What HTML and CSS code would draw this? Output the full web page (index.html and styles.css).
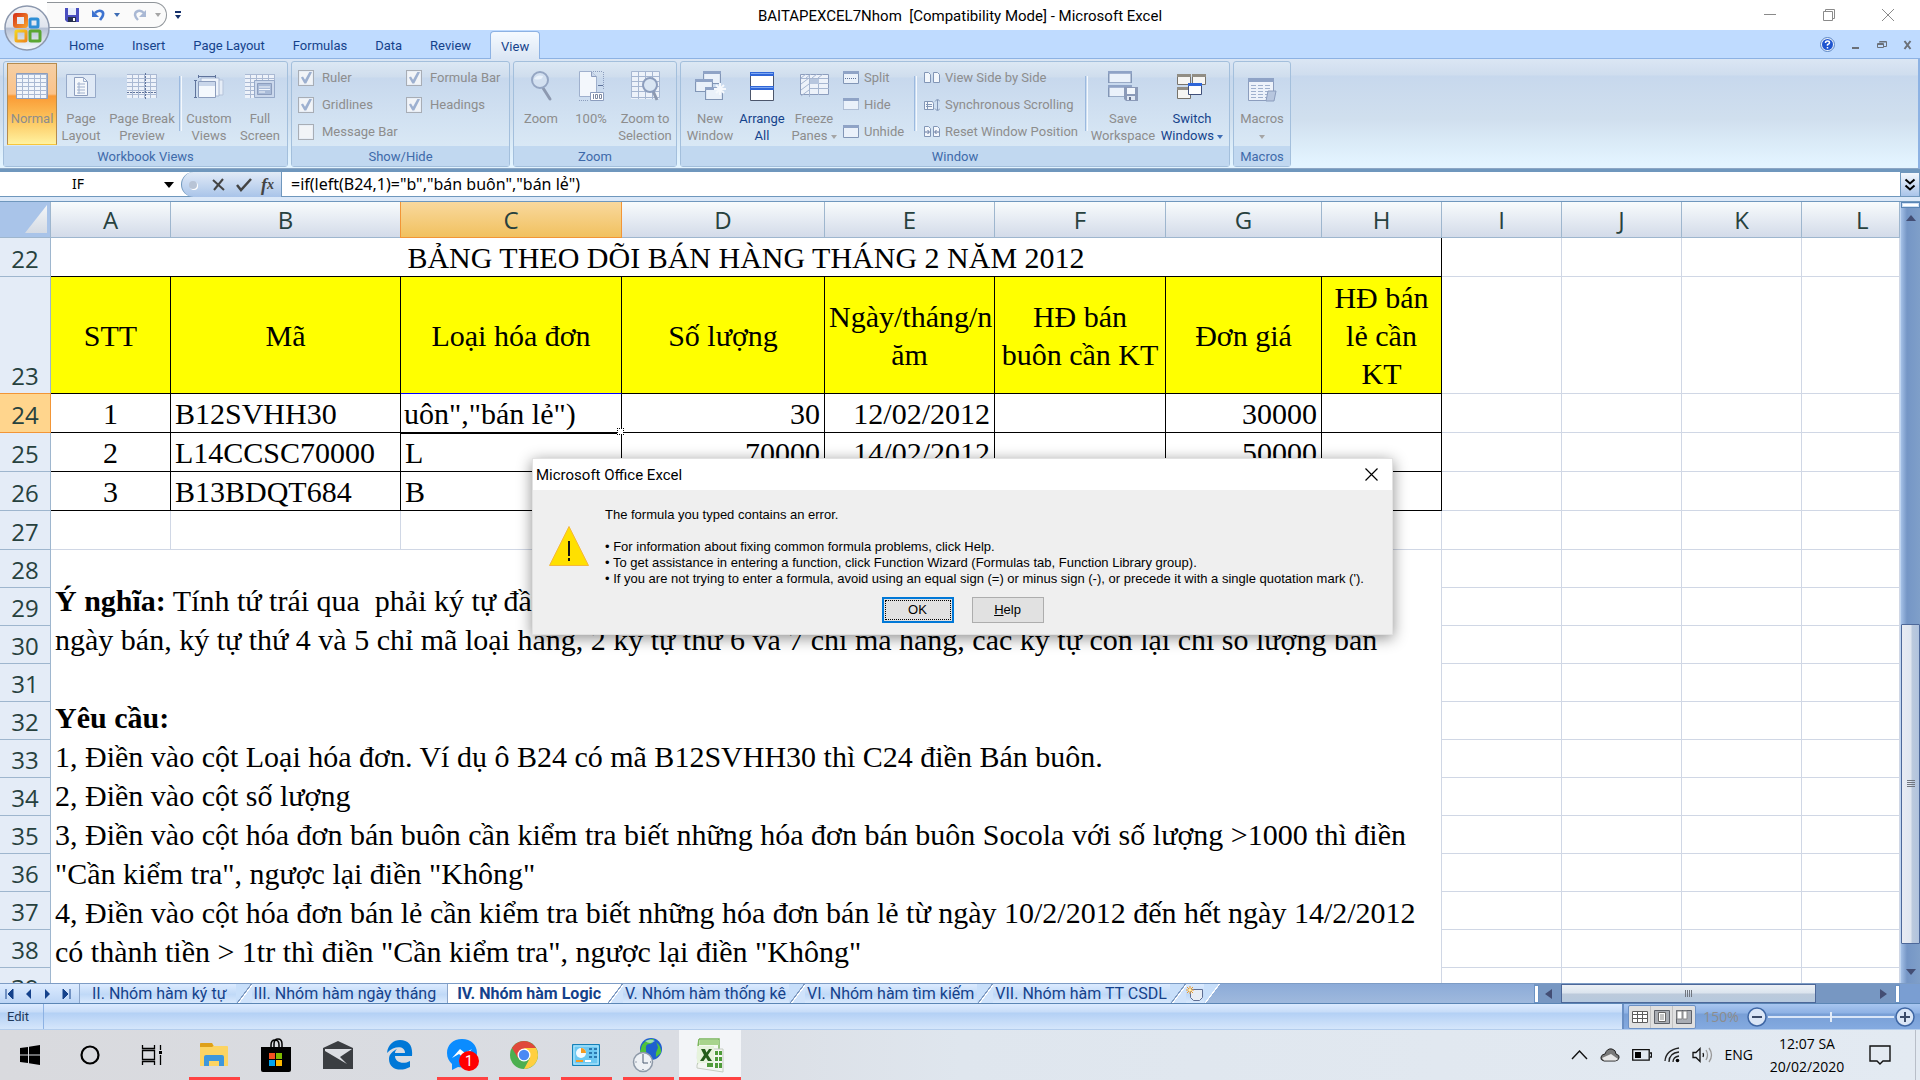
FILE: index.html
```html
<!DOCTYPE html>
<html lang="vi">
<head>
<meta charset="utf-8">
<title>BAITAPEXCEL7Nhom - Microsoft Excel</title>
<link rel="stylesheet" href="styles.css">
</head>
<body>
<div class="app">

<header class="titlebar">
  <div class="quick">
    <button class="bare" aria-label="Save"><svg width="14" height="14" viewBox="0 0 14 14"><path d="M0 0h14v14H2l-2-2z" fill="#4a4fc0"/><path d="M3 0h8v7H3z" fill="#e8eefc"/><path d="M3 9h8v5H3z" fill="#26304f"/><path d="M8 10h2v3H8z" fill="#fff"/></svg></button>
    <button class="bare" aria-label="Undo"><svg width="14" height="14" viewBox="0 0 14 14"><path d="M3 5c4-4 9-2 8 2-.3 2-2 3.500-3 5" fill="none" stroke="#3d73d0" stroke-width="2.600"/><path d="M0 2v7h7z" fill="#3d73d0"/></svg></button>
    <i class="caret blue"></i>
    <button class="bare" aria-label="Redo"><svg width="14" height="14" viewBox="0 0 14 14"><path d="M11 5C7 1 2 3 2 7c.3 2 1 3 3 5" fill="none" stroke="#a9b8d4" stroke-width="2.400"/><path d="M13 2v7H6z" fill="#a9b8d4"/></svg></button>
    <i class="caret gray"></i>
  </div>
  <button class="bare more" aria-label="Customize Quick Access Toolbar"><i class="bar"></i><i class="caret navy"></i></button>
  <h1 class="title">BAITAPEXCEL7Nhom&nbsp; [Compatibility Mode] - Microsoft Excel</h1>
  <div class="winbtns">
    <button class="bare" aria-label="Minimize"><svg width="14" height="14" viewBox="0 0 14 14"><path d="M1 6.500h12" stroke="#8a8a8a"/></svg></button>
    <button class="bare" aria-label="Restore"><svg width="14" height="14" viewBox="0 0 14 14" fill="none" stroke="#8a8a8a"><path d="M1.500 3.500h9v9h-9zM3.500 3V1.500h9v9H11"/></svg></button>
    <button class="bare" aria-label="Close"><svg width="14" height="14" viewBox="0 0 14 14"><path d="M1 1l12 12M13 1L1 13" stroke="#8a8a8a"/></svg></button>
  </div>
</header>

<button class="office" aria-label="Office Button"><svg width="46" height="46" viewBox="0 0 46 46">
  <defs><linearGradient id="ob" x1="0" y1="0" x2="0" y2="1"><stop offset="0" stop-color="#f4f5f8"/><stop offset=".48" stop-color="#dfe4ee"/><stop offset=".5" stop-color="#b4bfd4"/><stop offset="1" stop-color="#f6fafe"/></linearGradient>
  <linearGradient id="o1" x1="0" y1="0" x2="1" y2="1"><stop offset="0" stop-color="#d83a1a"/><stop offset="1" stop-color="#f59a2c"/></linearGradient>
  <linearGradient id="o2" x1="0" y1="0" x2="1" y2="1"><stop offset="0" stop-color="#f4d21f"/><stop offset="1" stop-color="#ee8a1c"/></linearGradient></defs>
  <circle cx="23" cy="23" r="22" fill="url(#ob)" stroke="#8c98ae" stroke-width="1.500"/>
  <rect x="11" y="10" width="11" height="11" rx="1" fill="none" stroke="url(#o1)" stroke-width="4"/>
  <rect x="26" y="14" width="8" height="8" rx="1" fill="none" stroke="#2f8fd6" stroke-width="3"/>
  <rect x="12" y="26" width="10" height="10" rx="1" fill="none" stroke="url(#o2)" stroke-width="3"/>
  <rect x="26" y="26" width="10" height="10" rx="1" fill="none" stroke="#5aa632" stroke-width="3"/>
</svg></button>

<nav class="tabs">
  <button class="tab">Home</button><button class="tab">Insert</button><button class="tab">Page Layout</button><button class="tab">Formulas</button><button class="tab">Data</button><button class="tab">Review</button><button class="tab on">View</button>
  <div class="docbtns">
    <button class="bare" aria-label="Help"><svg width="15" height="15" viewBox="0 0 15 15"><circle cx="7.500" cy="7.500" r="7" fill="#e9f1fc" stroke="#5c86c4"/><circle cx="7.500" cy="7.500" r="5.500" fill="#1f55d0"/><path d="M5.500 6q0-2 2-2t2 1.700q0 1-2 2v1M7.500 10v1.500" fill="none" stroke="#fff" stroke-width="1.500"/></svg></button>
    <button class="bare" aria-label="Minimize workbook"><svg width="10" height="10" viewBox="0 0 10 10"><path d="M1 7h7v2H1z" fill="#6b7078"/></svg></button>
    <button class="bare" aria-label="Restore workbook"><svg width="10" height="10" viewBox="0 0 10 10" fill="none" stroke="#6b7078"><path d="M.5 3.500h6v4h-6zM2.500 1.500h7v5H7M2 2h7M1 4.500h5"/></svg></button>
    <button class="bare" aria-label="Close workbook"><svg width="10" height="10" viewBox="0 0 10 10"><path d="M1.500 1l6 8M7.500 1l-6 8" stroke="#6b7078" stroke-width="2"/></svg></button>
  </div>
</nav>

<svg width="0" height="0" class="defs" aria-hidden="true"><defs>
  <pattern id="cells" width="6" height="4" patternUnits="userSpaceOnUse"><path d="M0 .5h6M.5 0v4" stroke="#aab9d3" fill="none"/></pattern>
  <symbol id="win" viewBox="0 0 16 14" preserveAspectRatio="none"><path d="M.5.5h15v12H.5z" fill="#eaf1fa" stroke="#8296b6"/><path d="M0 0h16v3H0z" fill="#8fa3c6"/></symbol>
</defs></svg>

<section class="ribbon">
  <div class="group">
    <div class="items">
      <button class="big normal"><svg width="32" height="32" viewBox="0 0 32 32"><path d="M1 4h30v24H1z" fill="#f2f6fc"/><path d="M1 4h30v24H1z" fill="url(#cells)"/><path d="M.5 3.500h31v25H.5z" fill="none" stroke="#8c9dbd"/></svg>Normal</button>
      <button class="big w48"><svg width="32" height="32" viewBox="0 0 32 32"><path d="M1.500 4.500h29v23h-29z" fill="#dfe9f6" stroke="#96a9c8"/><path d="M9.500 7.500h9l4 4v14h-13z" fill="#f5f8fc" stroke="#8c9dbd"/><path d="M18.500 7.500v4h4M12 14h8M12 17h8M12 20h8M12 23h8M14 12v12" fill="none" stroke="#9fb0cd"/></svg>Page<br>Layout</button>
      <button class="big w74"><svg width="32" height="32" viewBox="0 0 32 32"><path d="M1 4h30v24H1z" fill="#edf2fa"/><path d="M1 4h30v24H1z" fill="url(#cells)"/><path d="M19.500 3v26M1 22.500h30" stroke="#60749c" stroke-dasharray="2 1"/></svg>Page Break<br>Preview</button>
      <i class="sep"></i>
      <button class="big w54"><svg width="32" height="32" viewBox="0 0 32 32"><path d="M12 10h18v15H12z" fill="#e6edf7" stroke="#b5c3da"/><path d="M8 8h18v18H8z" fill="#edf3fb" stroke="#a9b9d4"/><path d="M5.500 11.500h17v16h-17z" fill="#f4f8fd" stroke="#8c9dbd"/><path d="M6 12h16v4H6z" fill="#c9d6ea"/><path d="M2.500 10v18M1 10.500h3M1 27.500h3M5 6.500h18M5.500 5v3M22.500 5v3" stroke="#60749c" fill="none"/></svg>Custom<br>Views</button>
      <button class="big w48"><svg width="32" height="32" viewBox="0 0 32 32"><path d="M1 4h30v24H1z" fill="#edf2fa"/><path d="M1 4h30v24H1z" fill="url(#cells)"/><path d="M10.500 10.500h20v17h-20z" fill="#cbd8ec" stroke="#96a9c8"/><path d="M13.500 13.500h14v11h-14z" fill="#a9bbd8" stroke="#8c9dbd"/><path d="M15 17h11M15 19.500h11M15 22h6" stroke="#f2f6fc"/></svg>Full<br>Screen</button>
    </div>
    <h2 class="cap">Workbook Views</h2>
  </div>
  <div class="group show">
    <div class="checks">
      <label><input type="checkbox" checked>Ruler</label><label><input type="checkbox" checked>Formula Bar</label>
      <label><input type="checkbox" checked>Gridlines</label><label><input type="checkbox" checked>Headings</label>
      <label><input type="checkbox">Message Bar</label>
    </div>
    <h2 class="cap">Show/Hide</h2>
  </div>
  <div class="group">
    <div class="items">
      <button class="big w48"><svg width="32" height="32" viewBox="0 0 32 32"><path d="M18 18l7 11" stroke="#8d99b0" stroke-width="3" stroke-linecap="round"/><circle cx="15" cy="10" r="8" fill="#d3e0f0" stroke="#95a6c3" stroke-width="2"/><path d="M9 9q3-5 9-3-1 5-9 3" fill="#eaf2fb"/></svg>Zoom</button>
      <button class="big w52"><svg width="32" height="32" viewBox="0 0 32 32"><path d="M4.500 1.500h12l5 5v20h-17z" fill="#f3f7fc" stroke="#9fb0cd"/><path d="M16.500 1.500v5h5" fill="#cbd8ec" stroke="#8c9dbd"/><path d="M4 30.500h10M28.500 2v18M18 1.500h10" stroke="#8c9dbd" stroke-dasharray="1 1"/><path d="M23 15.500h5" stroke="#60749c"/><path d="M15.500 22.500h13v8h-13z" fill="#fff" stroke="#8c9dbd"/><path d="M18.500 24v5M20.500 24.500h2v4h-2zM24.500 24.500h2v4h-2z" stroke="#7c88a0" fill="none"/></svg>100%</button>
      <button class="big w56"><svg width="32" height="32" viewBox="0 0 32 32"><path d="M2 2h28v27H2z" fill="#edf2fa"/><path d="M2.500 1.500h28v26h-28zM2.500 6.500h28M2.500 11.500h28M2.500 16.500h28M2.500 21.500h28M9.500 1v28M16.500 1v28M23.500 1v28" fill="none" stroke="#a6b6d1"/><path d="M24 21l4 9" stroke="#8d99b0" stroke-width="3"/><circle cx="21" cy="15" r="7" fill="#d9e5f3" stroke="#8c9dbd" stroke-width="2"/></svg>Zoom to<br>Selection</button>
    </div>
    <h2 class="cap">Zoom</h2>
  </div>
  <div class="group">
    <div class="items">
      <button class="big w52"><svg width="32" height="32" viewBox="0 0 32 32"><use href="#win" x="9" y="1" width="18" height="14"/><use href="#win" x="1" y="9" width="18" height="14"/><use href="#win" x="11" y="17" width="18" height="14"/><path d="M26 13v12M20 19h12M22 15l8 8M30 15l-8 8" stroke="#f6f9fd" stroke-width="2"/></svg>New<br>Window</button>
      <button class="big w52 live"><svg width="32" height="32" viewBox="0 0 32 32"><path d="M4.500 2.500h23v28h-23z" fill="#fff" stroke="#4c566b"/><path d="M4 2h24v4H4zM4 16h24v4H4z" fill="#2f66d8"/><path d="M5 3h22v1H5zM5 17h22v1H5z" fill="#7ea8f2"/></svg>Arrange<br>All</button>
      <button class="big w52"><svg width="32" height="32" viewBox="0 0 32 32"><path d="M2.500 4.500h28v20h-28z" fill="#edf2fa" stroke="#8c9dbd"/><path d="M3 8.500h27M11.500 5v22M11 13.500h20M11 18.500h20M20.500 9v16M3 8l5-4M8 8l5-4M14 8l5-4M20 8l5-4M3 14l8-6M3 20l8-6M3 26l8-6" fill="none" stroke="#a6b6d1"/><path d="M12 9h9v5h-9z" fill="#b7c6de"/></svg>Freeze<span>Panes <i class="caret gray"></i></span></button>
      <div class="stack">
        <button class="small"><svg width="16" height="14" viewBox="0 0 16 14"><use href="#win" width="16" height="14"/><path d="M2 7.500h12" stroke="#60749c" stroke-dasharray="1 1"/></svg>Split</button>
        <button class="small"><svg width="16" height="14" viewBox="0 0 16 14"><path d="M.5 2.500h15v9H.5z" fill="#eaf1fa" stroke="#8296b6" stroke-dasharray="1 1"/><path d="M0 0h16v3H0z" fill="#8fa3c6"/></svg>Hide</button>
        <button class="small"><svg width="16" height="14"><use href="#win" width="16" height="14"/></svg>Unhide</button>
      </div>
      <i class="sep"></i>
      <div class="stack two">
        <button class="small"><svg width="16" height="14" viewBox="0 0 16 14"><path d="M.5 1.500h4l2 2v8h-6zM9.500 1.500h4l2 2v8h-6z" fill="#f3f7fc" stroke="#8296b6"/></svg>View Side by Side</button>
        <button class="small"><svg width="16" height="14" viewBox="0 0 16 14"><path d="M.5 3.500h8l1 2v6h-9z" fill="#f3f7fc" stroke="#8296b6"/><path d="M3.500 4v7M2 6.500h6M2 8.500h6M13.500 2v10M11 3.500l2.500-2.500L16 3.500M11 10.500l2.500 2.500 2.500-2.500" stroke="#8296b6" fill="none"/></svg>Synchronous Scrolling</button>
        <button class="small"><svg width="16" height="14" viewBox="0 0 16 14"><path d="M.5 1.500h4l2 2v8h-6zM9.500 1.500h4l2 2v8h-6z" fill="#f3f7fc" stroke="#8296b6"/><path d="M1 7h4M3.500 5l2 2-2 2M15 7h-4M12.500 5l-2 2 2 2" stroke="#60749c" fill="none"/></svg>Reset Window Position</button>
      </div>
      <i class="sep"></i>
      <button class="big w70"><svg width="32" height="32" viewBox="0 0 32 32"><use href="#win" x="1" y="1" width="24" height="13"/><use href="#win" x="1" y="15" width="24" height="13"/><path d="M17 17h14v14H19l-2-2z" fill="#8b9ab8"/><path d="M20 18h8v6h-8z" fill="#f3f7fc"/><path d="M20 26h8v4h-8z" fill="#dfe7f3"/><path d="M22 27h2v3h-2z" fill="#66738f"/></svg>Save<br>Workspace</button>
      <button class="big w68 live"><svg width="32" height="32" viewBox="0 0 32 32"><path d="M1.500 4.500h13v10h-13zM16.500 4.500h13v10h-13zM1.500 17.500h13v11h-13z" fill="#f6f5f2" stroke="#77736b"/><path d="M1 4h14v3H1zM16 4h14v3H16zM1 17h14v3H1z" fill="#918d84"/><path d="M12.500 13.500h13v11h-13z" fill="#fff" stroke="#40507a"/><path d="M12 13h14v3H12z" fill="#2f66d8"/></svg>Switch<span>Windows <i class="caret blue"></i></span></button>
    </div>
    <h2 class="cap">Window</h2>
  </div>
  <div class="group">
    <div class="items">
      <button class="big w50"><svg width="32" height="32" viewBox="0 0 32 32"><path d="M2.500 8.500h25v22h-25z" fill="#edf2fa" stroke="#8c9dbd"/><path d="M2 8h26v4H2z" fill="#8fa3c6"/><path d="M5 15.500h20M5 18.500h20M5 21.500h20M5 24.500h20M5 27.500h20" stroke="#9fb0cd" stroke-dasharray="5 2"/><path d="M22 21h8l-2 10h-8z" fill="#b7c6de" stroke="#8c9dbd"/></svg>Macros<span><i class="caret gray"></i></span></button>
    </div>
    <h2 class="cap">Macros</h2>
  </div>
</section>

<div class="fbar">
  <input class="namebox" aria-label="Name Box" value="IF">
  <button class="bare drop" aria-label="Name list"><i class="caret black"></i></button>
  <div class="fbtns">
    <i class="dot"></i>
    <button class="bare" aria-label="Cancel"><svg width="16" height="16" viewBox="0 0 16 16"><path d="M2 3l11 10M12 2L3 13" stroke="#444" stroke-width="2"/></svg></button>
    <button class="bare" aria-label="Enter"><svg width="16" height="16" viewBox="0 0 16 16"><path d="M1 8l4 5L15 2" stroke="#444" stroke-width="2.500" fill="none"/></svg></button>
    <button class="bare fx" aria-label="Insert Function"><i>f</i><sub>x</sub></button>
  </div>
  <input class="formula" aria-label="Formula Bar" value='=if(left(B24,1)="b","bán buôn","bán lẻ")'>
  <button class="expand" aria-label="Expand Formula Bar"><svg width="12" height="14" viewBox="0 0 12 14"><path d="M1.500 1.500L6 5.500l4.500-4M1.500 7.500L6 11.500l4.500-4" fill="none" stroke="#000" stroke-width="2"/></svg></button>
</div>

<main class="work">
  <div class="sheet">
  <table class="grid">
    <colgroup><col class="c-h"><col class="c-a"><col class="c-b"><col class="c-c"><col class="c-d"><col class="c-e"><col class="c-f"><col class="c-g"><col class="c-i"><col class="c-i"><col class="c-i"><col class="c-i"><col></colgroup>
    <thead><tr><th class="corner"><i></i></th><th>A</th><th>B</th><th class="sel">C</th><th>D</th><th>E</th><th>F</th><th>G</th><th>H</th><th>I</th><th>J</th><th>K</th><th class="last">L</th></tr></thead>
    <tbody>
    <tr class="r39"><th>22</th><td colspan="8" class="k mid">BẢNG THEO DÕI BÁN HÀNG THÁNG 2 NĂM 2012</td><td></td><td></td><td></td><td></td></tr>
    <tr class="r117"><th>23</th><td class="k y">STT</td><td class="k y">Mã</td><td class="k y over">Loại hóa đơn</td><td class="k y">Số lượng</td><td class="k y">Ngày/tháng/n<br>ăm</td><td class="k y">HĐ bán<br>buôn cần KT</td><td class="k y">Đơn giá</td><td class="k y">HĐ bán<br>lẻ cần<br>KT</td><td></td><td></td><td></td><td></td></tr>
    <tr class="r39"><th class="sel">24</th><td class="k mid">1</td><td class="k">B12SVHH30</td><td class="k edit">uôn","bán lẻ")</td><td class="k num">30</td><td class="k num">12/02/2012</td><td class="k"></td><td class="k num">30000</td><td class="k"></td><td></td><td></td><td></td><td></td></tr>
    <tr class="r39"><th>25</th><td class="k mid">2</td><td class="k">L14CCSC70000</td><td class="k">L</td><td class="k num">70000</td><td class="k num">14/02/2012</td><td class="k"></td><td class="k num">50000</td><td class="k"></td><td></td><td></td><td></td><td></td></tr>
    <tr class="r39"><th>26</th><td class="k mid">3</td><td class="k">B13BDQT684</td><td class="k">B</td><td class="k"></td><td class="k"></td><td class="k"></td><td class="k"></td><td class="k"></td><td></td><td></td><td></td><td></td></tr>
    <tr class="r39"><th>27</th><td></td><td></td><td></td><td></td><td></td><td></td><td></td><td></td><td></td><td></td><td></td><td></td></tr>
    <tr><th>28</th><td colspan="8" rowspan="12" class="notes"><b>Ý nghĩa:</b> Tính tứ trái qua&nbsp; phải ký tự đầu<br>ngày bán, ký tự thứ 4 và 5 chỉ mã loại hàng, 2 ký tự thứ 6 và 7 chỉ mã hàng, các ký tự còn lại chỉ số lượng bán<br><br><b>Yêu cầu:</b><br>1, Điền vào cột Loại hóa đơn. Ví dụ ô B24 có mã B12SVHH30 thì C24 điền Bán buôn.<br>2, Điền vào cột số lượng<br>3, Điền vào cột hóa đơn bán buôn cần kiểm tra biết những hóa đơn bán buôn Socola với số lượng &gt;1000 thì điền<br>"Cần kiểm tra", ngược lại điền "Không"<br>4, Điền vào cột hóa đơn bán lẻ cần kiểm tra biết những hóa đơn bán lẻ từ ngày 10/2/2012 đến hết ngày 14/2/2012<br>có thành tiền &gt; 1tr thì điền "Cần kiểm tra", ngược lại điền "Không"</td><td></td><td></td><td></td><td></td></tr>
    <tr><th>29</th><td></td><td></td><td></td><td></td></tr>
    <tr><th>30</th><td></td><td></td><td></td><td></td></tr>
    <tr><th>31</th><td></td><td></td><td></td><td></td></tr>
    <tr><th>32</th><td></td><td></td><td></td><td></td></tr>
    <tr><th>33</th><td></td><td></td><td></td><td></td></tr>
    <tr><th>34</th><td></td><td></td><td></td><td></td></tr>
    <tr><th>35</th><td></td><td></td><td></td><td></td></tr>
    <tr><th>36</th><td></td><td></td><td></td><td></td></tr>
    <tr><th>37</th><td></td><td></td><td></td><td></td></tr>
    <tr><th>38</th><td></td><td></td><td></td><td></td></tr>
    <tr><th>39</th><td></td><td></td><td></td><td></td></tr>
    </tbody>
  </table>
  </div>
  <div class="vscroll">
    <i class="split"></i>
    <i class="arrow up"></i>
    <i class="above"></i><i class="thumb"><i></i></i><i class="below"></i>
    <i class="arrow down"></i>
  </div>
</main>

<div class="sheetbar">
  <div class="nav">
    <button class="bare" aria-label="First sheet"><svg width="9" height="10" viewBox="0 0 9 10"><path d="M1 0v10M8 0L3 5l5 5z" fill="#15428b" stroke="#15428b"/></svg></button>
    <button class="bare" aria-label="Previous sheet"><svg width="9" height="10" viewBox="0 0 9 10"><path d="M7 0L2 5l5 5z" fill="#15428b"/></svg></button>
    <button class="bare" aria-label="Next sheet"><svg width="9" height="10" viewBox="0 0 9 10"><path d="M2 0l5 5-5 5z" fill="#15428b"/></svg></button>
    <button class="bare" aria-label="Last sheet"><svg width="9" height="10" viewBox="0 0 9 10"><path d="M8 0v10M1 0l5 5-5 5z" fill="#15428b" stroke="#15428b"/></svg></button>
  </div>
  <button class="st first">II. Nhóm hàm ký tự</button><i class="slash"></i>
  <button class="st wide">III. Nhóm hàm ngày tháng</button>
  <button class="st cur">IV. Nhóm hàm Logic</button><i class="slash left"></i>
  <button class="st">V. Nhóm hàm thống kê</button><i class="slash"></i>
  <button class="st">VI. Nhóm hàm tìm kiếm</button><i class="slash"></i>
  <button class="st">VII. Nhóm hàm TT CSDL</button><i class="slash"></i>
  <button class="st new" aria-label="Insert Worksheet"><svg width="18" height="16" viewBox="0 0 18 16"><path d="M4.500 3.500h12v8l-3 3h-6l-3-3z" fill="#e8edf5" stroke="#5f6f94"/><path d="M4 0v8M0 4h8M1 1l6 6M7 1L1 7" stroke="#ee9a2a"/><circle cx="4" cy="4" r="1.500" fill="#fff2b0"/></svg></button><i class="slash end"></i>
  <div class="gap"></div>
  <div class="hscroll">
    <i class="grab"></i><i class="arrow lft"></i><i class="thumb"><i></i></i><i class="rest"></i><i class="arrow rgt"></i><i class="grab"></i>
  </div>
  <i class="nook"></i>
</div>

<footer class="status">
  <span class="mode">Edit</span>
  <div class="zoombar">
    <div class="views">
      <button class="bare" aria-label="Normal view"><svg width="18" height="16" viewBox="0 0 18 16"><path d="M1 2h16v12H1z" fill="#fff"/><path d="M1.500 2.500h15v11h-15zM1 5.500h16M1 9.500h16M6.500 2v12M11.500 2v12" fill="none" stroke="#5c5c5c"/></svg></button>
      <button class="bare" aria-label="Page layout view"><svg width="18" height="16" viewBox="0 0 18 16"><path d="M1.500 1.500h15v13h-15z" fill="#a9adb4" stroke="#5c6068"/><path d="M5.500 3.500h7v9h-7z" fill="#fff" stroke="#666"/><path d="M7 6h4M7 8h4M7 10h4" stroke="#888"/></svg></button>
      <button class="bare" aria-label="Page break view"><svg width="18" height="16" viewBox="0 0 18 16"><path d="M1.500 1.500h15v13h-15z" fill="#a9adb4" stroke="#5c6068"/><path d="M2 2h5v8H2zM8 2h4v8H8z" fill="#fff" stroke="#888"/></svg></button>
    </div>
    <span class="pct">150%</span>
    <button class="bare" aria-label="Zoom Out"><svg width="22" height="22" viewBox="0 0 22 22"><circle cx="11" cy="11" r="9" fill="#dbe6f6" stroke="#3f67a5" stroke-width="1.500"/><path d="M6 11h10" stroke="#3c4b69" stroke-width="2"/></svg></button>
    <input type="range" class="zoom" aria-label="Zoom" min="0" max="100" value="50">
    <button class="bare" aria-label="Zoom In"><svg width="22" height="22" viewBox="0 0 22 22"><circle cx="11" cy="11" r="9" fill="#dbe6f6" stroke="#3f67a5" stroke-width="1.500"/><path d="M6 11h10M11 6v10" stroke="#3c4b69" stroke-width="2"/></svg></button>
  </div>
</footer>

<div class="taskbar">
  <button class="sys" aria-label="Start"><svg width="20" height="20" viewBox="0 0 20 20"><path d="M0 3l8-1v7.500H0zM9 1.800L20 0v9.500H9zM0 10.500h8V18l-8-1zM9 10.500h11V20L9 18.200z"/></svg></button>
  <button class="sys" aria-label="Search"><svg width="20" height="20" viewBox="0 0 20 20"><circle cx="10" cy="10" r="8.500" fill="none" stroke="#000" stroke-width="2.200"/></svg></button>
  <button class="sys" aria-label="Task View"><svg width="22" height="20" viewBox="0 0 22 20"><path d="M1.500 0v3.500h12V0M1.500 5.500h12v9h-12zM1.500 20v-3.500h12V20M19.500 0v5M19.500 10v10" fill="none" stroke="#000" stroke-width="1.300"/><path d="M18 6h3v3h-3z"/></svg></button>
  <button class="task run" aria-label="File Explorer"><svg width="28" height="28" viewBox="0 0 28 28"><path d="M0 3q0-1 1-1h11l2 3h13q1 0 1 1v19H0z" fill="#fcd462"/><path d="M1 2h11l1.500 3L12 6H0V3q0-1 1-1" fill="#dea019"/><path d="M4 25V16q0-2 2-2h16q2 0 2 2v9h-5v-5H9v5z" fill="#3e97dc"/></svg></button>
  <button class="task" aria-label="Microsoft Store"><svg width="30" height="34" viewBox="0 0 30 34"><path d="M0 9h30v23q0 2-2 2H2q-2 0-2-2z"/><path d="M10 10V7q0-5 4-5t4 5v3M13 10V6q0-5 4-5t4 5v4" fill="none" stroke="#000" stroke-width="1.500"/><path d="M8 15h6v6H8z" fill="#f25022"/><path d="M15 15h6v6h-6z" fill="#7fba00"/><path d="M8 22h6v6H8z" fill="#00a4ef"/><path d="M15 22h6v6h-6z" fill="#ffb900"/></svg></button>
  <button class="task" aria-label="Mail"><svg width="30" height="28" viewBox="0 0 30 28"><path d="M0 7l15-7 15 7v21H0z" fill="#3b3e42"/><path d="M2 8h27L17 16l7 7L2 10z" fill="#dcdee3"/></svg></button>
  <button class="task" aria-label="Edge"><svg width="26" height="30" viewBox="0 0 26 30"><path d="M0 13C1 4 7 0 13 0c9 0 13 6 12 16H8c0 6 8 9 15 5v6c-9 5-21 3-21-8 0-5 4-8 8-10-2 2-2 3-2 4h10c0-7-10-8-18 0z" fill="#0078d7"/></svg></button>
  <button class="task run" aria-label="Messenger, 1 notification"><svg width="32" height="32" viewBox="0 0 32 32"><path d="M16 0C7 0 1 6 1 14c0 5 2 8 5 11v6l6-3c11 2 19-5 19-14C31 6 25 0 16 0" fill="#0a8cff"/><path d="M6 19l8-9 5 4 7-4-8 9-5-4z" fill="#fff"/></svg><span class="badge">1</span></button>
  <button class="task run" aria-label="Chrome"><svg width="28" height="28" viewBox="0 0 28 28"><circle cx="14" cy="14" r="14" fill="#4caf50"/><path d="M14 14L1.900 7A14 14 0 0 1 26.100 7z" fill="#e0483a"/><path d="M2 7l12 0v7L8 17z" fill="#e0483a"/><path d="M14 7h12.100A14 14 0 0 1 14 28l6-11z" fill="#ffcf40"/><circle cx="14" cy="14" r="6.500" fill="#fff"/><circle cx="14" cy="14" r="5.200" fill="#4a8af4"/></svg></button>
  <button class="task run" aria-label="Control Panel"><svg width="28" height="22" viewBox="0 0 28 22"><path d="M.5.5h27v21H.5z" fill="#6cc8f2" stroke="#1580b8"/><path d="M2 2h24v18H2z" fill="none" stroke="#b9e8fb"/><circle cx="9" cy="9" r="5" fill="#f4fbff"/><path d="M9 9V4a5 5 0 0 1 5 5z" fill="#f59b22"/><path d="M17 5h3M17 9h3M17 13h3M22 5h3M22 9h3M22 13h3" stroke="#155f9c" stroke-width="1.500"/><path d="M4 17h7" stroke="#f59b22" stroke-width="2"/><path d="M13 17h6" stroke="#fff" stroke-width="2"/></svg></button>
  <button class="task run" aria-label="Date and Time"><svg width="32" height="38" viewBox="0 0 32 38"><circle cx="19" cy="13" r="11" fill="#1f5fd0"/><path d="M10 9q5-7 12-6-1 5-5 5t-3 6-6 2M24 6q6 5 5 11l-5 4q-1-4 1-7t-1-8" fill="#4fc23a"/><path d="M13 5q6-3 10 0-5 4-10 0" fill="#d8f4ff" opacity=".6"/><circle cx="11" cy="26" r="9.500" fill="#eef1f5" stroke="#8e99a8" stroke-width="1.500"/><path d="M11 19v8h5M11 18v1M11 33v1M3.500 26h1M18 26h1" stroke="#4b5a70" fill="none"/></svg></button>
  <button class="task run active" aria-label="Excel"><svg width="30" height="36" viewBox="0 0 30 36"><path d="M4 2h20v26H3q-1-14 1-26" fill="#f4faf0" stroke="#7ab55c" stroke-width="1.500"/><path d="M5 3h19v5H4z" fill="#a8d48c"/><path d="M10 12l18 0v23l-26-4v-3z" fill="#f4f7f2" stroke="#c5ccc2"/><path d="M20 14h3v4h-3zM24 14h3v4h-3zM20 20h3v4h-3zM24 20h3v4h-3zM20 26h3v5h-3zM24 26h3v5h-3zM12 26h6v4h-6z" fill="#4f9b3a"/><path d="M2 9h17v17H2z" fill="#e6f3dc"/><path d="M6 12h4l1.500 3.500L14 12h3l-4 6 4 6h-4l-2-3.500L8.500 24H5l4-6z" fill="#245c1c"/></svg></button>
  <div class="tray">
    <svg width="17" height="10" viewBox="0 0 17 10"><path d="M1 9l7.500-8L16 9" fill="none" stroke="#111" stroke-width="1.400"/></svg>
    <svg width="20" height="14" viewBox="0 0 20 14"><path d="M4 13q-4-1-3-4 1-3 4-3Q7 0 12 1q4 1 4 5 4 1 3 4-1 3-4 3z" fill="#7a7a7a" stroke="#222"/><path d="M2 10l9-4 7 5-2 1.500H4z" fill="#e8e8e8"/></svg>
    <svg width="20" height="12" viewBox="0 0 20 12"><path d="M.7.7h16.500v10.500H.7zM18 4h1.500v4H18" fill="none" stroke="#111" stroke-width="1.300"/><path d="M3 3h6v6H3z"/></svg>
    <svg width="16" height="16" viewBox="0 0 16 16"><path d="M1 14Q2 3 15 1M5 15Q5 6 15 5M9 15q0-5 6-6" fill="none" stroke="#222" stroke-width="1.300"/><circle cx="13.500" cy="13.500" r="1.800"/></svg>
    <svg width="21" height="18" viewBox="0 0 21 18"><path d="M1 6.500h3l4-4v13l-4-4H1z" fill="none" stroke="#111" stroke-width="1.300"/><path d="M11 7q1 2 0 4" fill="none" stroke="#111" stroke-width="1.300"/><path d="M14 4q3 5 0 10M17 2q5 7 0 14" fill="none" stroke="#999" stroke-width="1.300"/></svg>
    <span class="lang">ENG</span>
    <time class="clock">12:07 SA<br>20/02/2020</time>
    <svg width="22" height="20" viewBox="0 0 22 20"><path d="M1 1h20v15h-7l-3 3-3-3H1z" fill="none" stroke="#111" stroke-width="1.400"/></svg>
    <i class="peek"></i>
  </div>
</div>

<div class="dialog" role="dialog" aria-labelledby="dt">
  <div class="dhead"><h2 id="dt">Microsoft Office Excel</h2><button class="bare" aria-label="Close"><svg width="13" height="13" viewBox="0 0 13 13"><path d="M.5.5l12 12M12.500.5l-12 12" stroke="#000" stroke-width="1.200"/></svg></button></div>
  <div class="dbody">
    <svg width="42" height="42" viewBox="0 0 42 42"><path d="M21 1.500L40.500 40.500H1.500z" fill="#ffe000" stroke="#f5b83a"/><path d="M21 16v15M21 33v3" stroke="#111" stroke-width="2"/></svg>
    <div class="dtext"><p>The formula you typed contains an error.</p><ul><li>• For information about fixing common formula problems, click Help.</li><li>• To get assistance in entering a function, click Function Wizard (Formulas tab, Function Library group).</li><li>• If you are not trying to enter a formula, avoid using an equal sign (=) or minus sign (-), or precede it with a single quotation mark (').</li></ul></div>
  </div>
  <div class="dbtns"><button class="ok">OK</button><button><u>H</u>elp</button></div>
</div>

</div>
</body>
</html>
```
FILE: styles.css
```css
*{box-sizing:border-box}
body,h1,h2,p,ul{margin:0;padding:0}
body{font:13px/16px Roboto,"Noto Sans",sans-serif;color:#000;background:#fff}
button,input{font:inherit;color:inherit;margin:0;border-radius:0}
button{padding:0}
svg{display:block;flex:none}
i{display:block;font-style:normal}
.defs{position:absolute}
.bare{border:0;background:none;display:flex;align-items:center;justify-content:center}
.app{height:100vh;display:flex;flex-direction:column;position:relative;overflow:hidden}
.caret{width:0;height:0;border:3px solid transparent;border-top:4px solid;border-bottom:0;display:inline-block;vertical-align:middle;flex:none}
.blue{color:#3e6db5}.gray{color:#a5a5a5}.navy{color:#15306b}
.black{border-width:5px;border-top-width:6px;border-bottom:0}

/* title bar */
.titlebar{height:30px;flex:none;display:flex;align-items:center;position:relative}
.quick{margin-left:47px;width:120px;height:26px;border:1px solid #8f9499;border-left:0;border-radius:0 13px 13px 0;background:#fafafa;display:flex;align-items:center;padding-left:18px}
.quick .caret{margin:0 13px 0 8px}
.quick>:first-child{margin-right:13px}
.more{flex-direction:column;gap:2px;margin-left:8px}
.bar{width:6px;height:2px;background:#15306b}
.title{position:absolute;inset:0;text-align:center;font:15px/32px Roboto,sans-serif;pointer-events:none}
.winbtns{margin-left:auto;display:flex;gap:45px;padding-right:25px}
.office{position:absolute;left:4px;top:5px;border:0;background:none;z-index:2}

/* ribbon tabs */
.tabs{height:29px;flex:none;background:#bfdbff;display:flex;padding:1px 7px 0 55px;border-bottom:1px solid #8db2e3}
.tab{border:1px solid transparent;background:none;padding:2px 13px 0;color:#15428b}
.tab.on{margin:0 0 -1px 5px;padding:2px 10px 0;border-color:#8db2e3;border-bottom:0;border-radius:4px 4px 0 0;background:linear-gradient(#f5faff,#dbe6f4)}
.docbtns{margin-left:auto;display:flex;gap:16px;align-items:center}

/* ribbon */
.ribbon{height:110px;flex:none;display:flex;gap:3px;padding:2px 3px 1px;background:linear-gradient(#dbe6f4,#cfddee 16px,#c7d8ed 17px,#d0dfee 60px,#e3f4ff 104px);border-right:2px solid #8db2e3;border-bottom:1px solid #8ca6c4}
.group{display:flex;flex-direction:column;border:1px solid #a3bfdc;border-radius:3px;background:linear-gradient(#dce8f4,#cfdded 15px,#c7d8ed 16px,#d9e8f5 84px)}
.items{flex:1;display:flex;padding:0 3px}
.cap{height:20px;font:13px/21px Roboto,sans-serif;text-align:center;color:#3e6aaa;background:#c1d8f0}
.big{border:0;background:none;color:#8d8d8d;display:flex;flex-direction:column;align-items:center;padding-top:8px;line-height:17px;white-space:nowrap}
.big svg{margin-bottom:8px}
.big span{display:block}
.w48{width:48px}.w50{width:50px}.w52{width:52px}.w54{width:54px}.w56{width:56px}.w68{width:68px}.w70{width:70px}.w74{width:74px}
.live,.live span{color:#15428b}
.normal{width:50px;margin-top:1px;height:82px;padding-top:6px;border:1px solid #b58b4e;border-bottom-color:#f7c63c;background:linear-gradient(#f5cfa4,#fbc38a 30px,#fa9a35 32px,#fcc45c 55px,#fff2a0)}
.sep{width:3px;height:55px;margin-top:14px;border-left:1px solid #9bb9df;border-right:1px solid #f4f8fd}
.show{width:219px}
.checks{flex:1;display:grid;grid-template-columns:108px 1fr;grid-auto-rows:27px;padding:2px 0 0 6px}
.checks label{display:flex;align-items:center;gap:8px;color:#8d8d8d;white-space:nowrap}
.checks input{appearance:none;width:16px;height:16px;border:1px solid #a8adb5;background:#f2f4f7;outline:1px solid #e8eef6;outline-offset:-2px}
.checks input:checked::before{content:"";display:block;width:12px;height:12px;margin:1px;background:#9db0d0;clip-path:polygon(8% 50%,25% 42%,42% 68%,80% 0,100% 6%,52% 100%,36% 100%)}
.stack{display:flex;flex-direction:column;width:74px;padding:2px 0 0 3px}
.two{width:168px;padding-left:7px}
.small{height:27px;border:0;background:none;color:#8d8d8d;display:flex;align-items:center;gap:5px;white-space:nowrap}

/* formula bar */
.fbar{height:32px;flex:none;display:flex;border-top:3px solid #6f97bd;border-bottom:4px solid #dbe8f8;box-shadow:inset 0 -1px #6f97bd,0 1px #6f97bd;background:#fff;position:relative}
.namebox{width:156px;border:0;background:none;text-align:center;padding:0 0 2px;font:14px/24px "Noto Sans",sans-serif}
.drop{width:25px}
.fbtns{width:101px;display:flex;align-items:center;gap:9px;padding-left:7px;border:1px solid #6f97bd;border-width:0 1px;border-radius:13px 0 0 13px;background:linear-gradient(#e2ebf7,#a9c4e9)}
.dot{width:8px;height:8px;border-radius:50%;background:#b8c4d6;margin-right:5px;box-shadow:1px 1px #fff}
.fx{font:italic bold 18px/20px "Liberation Serif",serif;color:#444}
.fx i{font-style:italic}
.fx sub{font-size:14px;line-height:14px}
.formula{flex:1;border:0;background:none;padding:0 9px 2px;font:16px/24px "Noto Sans",sans-serif;outline:0}
.expand{width:20px;border:1px solid #6f97bd;background:linear-gradient(#f4f8fd,#a9c4e9);display:flex;align-items:center;justify-content:center}

/* worksheet */
.work{flex:1;min-height:0;display:flex}
.sheet{flex:1;min-width:0;overflow:hidden}
.grid{table-layout:fixed;width:100%;border-collapse:separate;border-spacing:0;font:30px/36px "Liberation Serif",serif}
.c-h{width:51px}.c-a{width:120px}.c-b{width:230px}.c-c{width:221px}.c-d{width:203px}.c-e{width:170px}.c-f{width:171px}.c-g{width:156px}.c-i{width:120px}
.grid td,.grid th{padding:2px 4px 0;height:38px;border:0 solid #d0d7e5;border-width:0 1px 1px 0;white-space:nowrap}
.grid th{font:24px/30px "Open Sans",sans-serif;color:#27413e;border-color:#9eb6ce}
.grid thead th{height:37px;background:linear-gradient(#f9fcfd,#d3dbe9)}
.grid thead .sel{background:linear-gradient(#f9d99f,#f1c15f);border-color:#f29536;box-shadow:-1px 0 #f29536}
.grid thead .corner{background:#a9c4e9;padding:0 3px}
.corner i{width:22px;height:28px;margin-left:auto;background:linear-gradient(#f4f6f8,#d5dbe4);clip-path:polygon(100% 0,100% 100%,0 100%)}
.grid thead .last{padding-left:54px;text-align:left}
.grid tbody th{background:#e4ecf7;vertical-align:bottom;padding:0;line-height:34px}
.grid tbody .sel{background:#ffd58d;border-color:#f29536;box-shadow:0 -1px #f29536}
.grid .r39 td,.grid .r39 th{height:39px}
.grid .r117 td,.grid .r117 th{height:117px}
.grid .k{border-color:#000}
.grid .y{background:#ff0;text-align:center;line-height:38px}
.grid .over{border-bottom-color:#00f}
.mid{text-align:center}
.num{text-align:right}
.grid .edit{position:relative;padding-left:3px;box-shadow:0 1px #000}
.edit::after{content:"";position:absolute;right:-3px;bottom:-3px;width:5px;height:5px;border:1px dotted #000;background:#fff}
.grid .notes{vertical-align:top;padding-top:31px;line-height:39px}

/* scroll bars */
.vscroll{width:20px;display:flex;flex-direction:column;align-items:center;background:linear-gradient(90deg,#a4c0e6,#7596c6 6px,#7f9fc9);border-left:1px solid #c0d6f2;padding-bottom:8px}
.split{width:100%;height:6px;margin-top:1px;border:1px solid #5a85b5;background:#fff;box-shadow:inset 0 0 0 1px #cfe0f5}
.arrow{width:0;height:0;border:5px solid transparent;flex:none}
.up{border-bottom:6px solid #434e74;border-top:0;margin:7px 0 9px}
.down{border-top:6px solid #434e74;border-bottom:0}
.above{flex:394}.below{flex:25}
.vscroll .thumb{flex:318;width:19px;border:1px solid #4d6899;border-radius:1px;background:linear-gradient(90deg,#e8ebf2,#dfe6f0 9px,#bccadd 10px,#b0c3de);display:flex;align-items:center;justify-content:center}
.vscroll .thumb i{width:8px;height:8px;background:repeating-linear-gradient(#71767f 0 1px,transparent 1px 2px)}
.sheetbar{height:21px;flex:none;display:flex;background:linear-gradient(#8cabd8,#9fb9dd);border-top:1px solid #7d9cc5;border-bottom:1px solid #5b86b5}
.nav{width:80px;display:flex;align-items:center;justify-content:space-between;padding:0 8px 0 5px;background:linear-gradient(#dcebff,#bcd5f5);border-right:1px solid #8ba5ca}
.st{border:0;background:linear-gradient(#dcebff,#c0d9f7 55%,#d9e9fd);padding:0 3px 0 2px;color:#15428b;font:16px/19px Roboto,sans-serif;white-space:nowrap}
.first{padding:0 9px 0 12px}
.wide{padding-right:11px;border-right:1px solid #8ba5ca}
.cur{background:#fff;font-weight:bold;padding:0 6px 0 9px}
.slash{width:16px;background:linear-gradient(127deg,#c8dffa 48%,#7e9ac2 49% 53%,#fff 54% 58%,#d0e3fb 59%)}
.left{background:linear-gradient(127deg,#fff 48%,#7e9ac2 49% 53%,#fff 54% 58%,#d0e3fb 59%)}
.end{background:linear-gradient(127deg,#c8dffa 48%,#fff 49% 53%,transparent 54%)}
.new{padding:0}
.gap{flex:1}
.hscroll{width:366px;display:flex;align-items:center;background:#7797c2}
.grab{width:5px;height:18px;border:1px solid #6a92c4;background:#fff;flex:none}
.lft{border-right:7px solid #434e74;border-left:0;margin:0 9px 0 6px}
.rgt{border-left:7px solid #434e74;border-right:0;margin-right:8px}
.hscroll .thumb{width:255px;height:19px;border:1px solid #4d6899;background:linear-gradient(#edf1f6,#dbe4ee 8px,#bccadb 9px,#b6c9de);display:flex;align-items:center;justify-content:center}
.hscroll .thumb i{width:8px;height:7px;background:repeating-linear-gradient(90deg,#71767f 0 1px,transparent 1px 2px)}
.rest{flex:1}
.nook{width:20px;background:#7a9ed2}

/* status bar */
.status{height:26px;flex:none;display:flex;justify-content:space-between;background:linear-gradient(#dcebff,#c7dcf8 8px,#b3d0f5 9px,#d5e6fb);border-bottom:1px solid #b4cdec}
.mode{width:44px;padding-left:7px;line-height:26px;color:#1e395b;border-right:1px solid #8db2e3}
.zoombar{width:298px;display:flex;align-items:center;padding-left:4px;border-left:2px solid #6b90c4;background:linear-gradient(#a8c6f0,#8db1e4 9px,#789fd6 10px,#84aae0)}
.views{display:flex;height:24px;border:1px solid #6b90c4;border-radius:2px;background:#e0e0e0}
.views .bare{width:22px;border-right:1px solid #c2c2c2}
.views .bare:last-child{border:0}
.pct{width:50px;text-align:center;color:#8d8d8d;font:14px/24px "Open Sans",sans-serif}
.zoom{appearance:none;flex:1;min-width:0;height:12px;background:linear-gradient(transparent 5px,#d9e6f8 5px 7px,transparent 7px)}
.zoom::-webkit-slider-thumb{appearance:none;width:2px;height:10px;background:#e3ecf8}
.zoombar>.bare:last-child{margin-right:4px}

/* taskbar */
.taskbar{height:50px;flex:none;display:flex;background:linear-gradient(90deg,#d9dade,#dadde3 35%,#dfe6ee 50%,#e3eaf2)}
.sys,.task{border:0;background:none;display:flex;align-items:center;justify-content:center;width:62px;position:relative}
.sys{width:60px}
.sys:nth-child(3){width:63px}
.run::after{content:"";position:absolute;left:6px;right:5px;bottom:0;height:3px;background:#ff4343}
.active{background:#f3f5f8}
.active::after{left:0;right:0}
.badge{position:absolute;left:28px;top:21px;width:20px;height:20px;border-radius:50%;background:#f00;color:#fff;font:14px/20px Roboto,sans-serif}
.tray{margin-left:auto;display:flex;align-items:center;gap:12px}
.lang{font:14px/20px "Open Sans",sans-serif}
.clock{font:14px/23px "Open Sans",sans-serif;text-align:center;width:84px;margin-right:8px}
.peek{width:5px;height:100%;border-left:1px solid #b8bec8;margin-left:12px}

/* message box */
.dialog{position:absolute;left:532px;top:458px;width:861px;border:1px solid #e2e2e2;background:#efefef;box-shadow:0 3px 14px rgba(0,0,0,.45);font:13px/16px "Liberation Sans",sans-serif}
.dhead{height:31px;background:#fff;display:flex;align-items:center;justify-content:space-between;padding:0 14px 0 3px}
.dhead h2{font:15px/30px Roboto,sans-serif}
.dbody{display:flex;gap:15px;padding:17px 0 0 15px}
.dbody svg{margin-top:18px}
.dtext ul{list-style:none;margin-top:16px}
.dbtns{display:flex;justify-content:center;gap:18px;padding:10px 0 11px}
.dbtns button{width:72px;height:26px;border:1px solid #adadad;background:#e1e1e1}
.dbtns .ok{border:2px solid #0078d7;outline:1px dotted #000;outline-offset:-4px}
```
